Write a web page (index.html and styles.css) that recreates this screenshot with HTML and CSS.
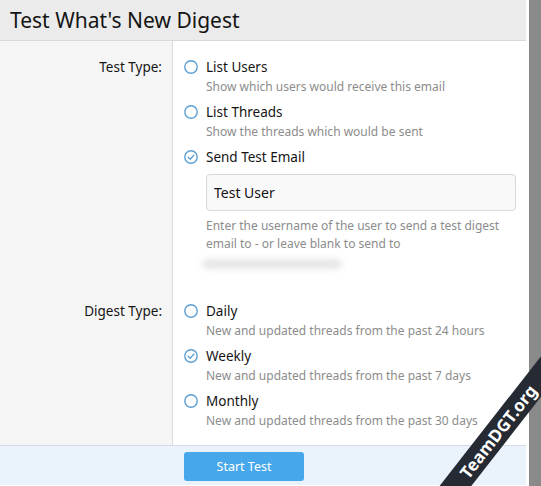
FILE: index.html
```html
<!DOCTYPE html>
<html lang="en">

<head>
  <meta charset="UTF-8" />
  <meta name="viewport" content="width=device-width, initial-scale=1.0" />
  <title>Test What's New Digest</title>
  <link rel="stylesheet" href="styles.css">
</head>

<body>
  <div class="page">
    <div class="overlay">
      <div class="overlay-title">Test What's New Digest</div>

      <form class="overlay-body" onsubmit="event.preventDefault();">
        <!-- TEST TYPE -->
        <dl class="form-row">
          <dt>Test Type:</dt>
          <dd>
            <ul class="choices">
              <li>
                <label class="choice">
                  <svg class="radio" viewBox="0 0 14 14"><circle cx="7" cy="7" r="6.2" /></svg>
                  List Users
                </label>
                <div class="hint">Show which users would receive this email</div>
              </li>
              <li>
                <label class="choice">
                  <svg class="radio" viewBox="0 0 14 14"><circle cx="7" cy="7" r="6.2" /></svg>
                  List Threads
                </label>
                <div class="hint">Show the threads which would be sent</div>
              </li>
              <li>
                <label class="choice">
                  <svg class="radio" viewBox="0 0 14 14"><circle cx="7" cy="7" r="6.2" /><path d="M4.2 7.3 L6.2 9.2 L9.9 5.1" /></svg>
                  Send Test Email
                </label>
                <div class="dependent">
                  <input type="text" class="input" value="Test User" />
                  <p class="explain">
                    Enter the username of the user to send a test digest email to - or leave blank to send to
                    <span class="redacted"></span>
                  </p>
                </div>
              </li>
            </ul>
          </dd>
        </dl>

        <!-- DIGEST TYPE -->
        <dl class="form-row last">
          <dt>Digest Type:</dt>
          <dd>
            <ul class="choices">
              <li>
                <label class="choice">
                  <svg class="radio" viewBox="0 0 14 14"><circle cx="7" cy="7" r="6.2" /></svg>
                  Daily
                </label>
                <div class="hint">New and updated threads from the past 24 hours</div>
              </li>
              <li>
                <label class="choice">
                  <svg class="radio" viewBox="0 0 14 14"><circle cx="7" cy="7" r="6.2" /><path d="M4.2 7.3 L6.2 9.2 L9.9 5.1" /></svg>
                  Weekly
                </label>
                <div class="hint">New and updated threads from the past 7 days</div>
              </li>
              <li>
                <label class="choice">
                  <svg class="radio" viewBox="0 0 14 14"><circle cx="7" cy="7" r="6.2" /></svg>
                  Monthly
                </label>
                <div class="hint">New and updated threads from the past 30 days</div>
              </li>
            </ul>
          </dd>
        </dl>

        <div class="form-submit">
          <button type="submit" class="submit-btn">Start Test</button>
        </div>
      </form>
    </div>
    <div class="scrollbar"></div>
  </div>

  <div class="watermark">TeamDGT.org</div>
</body>

</html>
```

FILE: styles.css
```css
body {
  font-family: "Noto Sans", "Open Sans", sans-serif;
  margin: 0;
  background-color: #ffffff;
  color: #141414;
  overflow: hidden;
  height: 486px;
  position: relative;
}

.page {
  display: flex;
  gap: 3px;
  height: 100%;
}

.overlay {
  width: 526px;
  display: flex;
  flex-direction: column;
}

.overlay-title {
  height: 41px;
  box-sizing: border-box;
  background-color: #ebebeb;
  border-bottom: 1px solid #d8d8d8;
  font-size: 21px;
  line-height: 40px;
  padding-left: 10px;
}

.overlay-body {
  margin: 0;
}

.form-row {
  display: grid;
  grid-template-columns: 173px 1fr;
  margin: 0;
}

.form-row dt {
  background-color: #f5f5f5;
  border-right: 1px solid #dcdcdc;
  text-align: right;
  padding: 16px 10px 0 0;
  font-size: 13.5px;
  line-height: 20px;
}

.form-row dd {
  margin: 0;
  padding: 16px 10px 14px 11px;
}

.form-row.last dd {
  padding-bottom: 15px;
}

.choices {
  list-style: none;
  margin: 0;
  padding: 0;
  display: flex;
  flex-direction: column;
  gap: 6px;
}

.choice {
  display: flex;
  align-items: center;
  gap: 8px;
  font-size: 13.5px;
  line-height: 20px;
}

.radio {
  width: 14px;
  height: 14px;
  flex: none;
  fill: none;
  stroke: #5b9fd3;
  stroke-width: 1.4;
  stroke-linecap: round;
  stroke-linejoin: round;
}

.hint {
  padding-left: 22px;
  font-size: 12px;
  line-height: 19px;
  color: #8c8c8c;
}

.dependent {
  padding-left: 22px;
  padding-top: 7px;
}

.input {
  display: block;
  width: 100%;
  height: 37px;
  box-sizing: border-box;
  border: 1px solid #d8d8d8;
  border-radius: 4px;
  background-color: #f9f9f9;
  padding: 0 7px;
  font-family: inherit;
  font-size: 14px;
  color: #141414;
}

.explain {
  margin: 6px 0 0;
  font-size: 12px;
  line-height: 18px;
  color: #8c8c8c;
}

.redacted {
  display: block;
  width: 140px;
  height: 10px;
  margin: 6px 0 2px -4px;
  background-color: #e6e6e6;
  border-radius: 5px;
  filter: blur(3px);
}

.form-submit {
  background-color: #eaf3fc;
  border-top: 1px solid #d3dce6;
  padding: 6px 0 0 184px;
  height: 40px;
  box-sizing: border-box;
}

.submit-btn {
  width: 120px;
  height: 29px;
  border: none;
  border-radius: 3px;
  background-color: #47a7eb;
  color: #ffffff;
  font-family: inherit;
  font-size: 12.5px;
  cursor: pointer;
}

.scrollbar {
  width: 12px;
  background-color: #8a8a8a;
}

.watermark {
  position: absolute;
  left: 393px;
  top: 419px;
  width: 210px;
  height: 25px;
  line-height: 25px;
  background-color: #262a33;
  color: #ffffff;
  font-weight: bold;
  font-size: 17px;
  text-align: center;
  transform: rotate(-52deg);
}
```
